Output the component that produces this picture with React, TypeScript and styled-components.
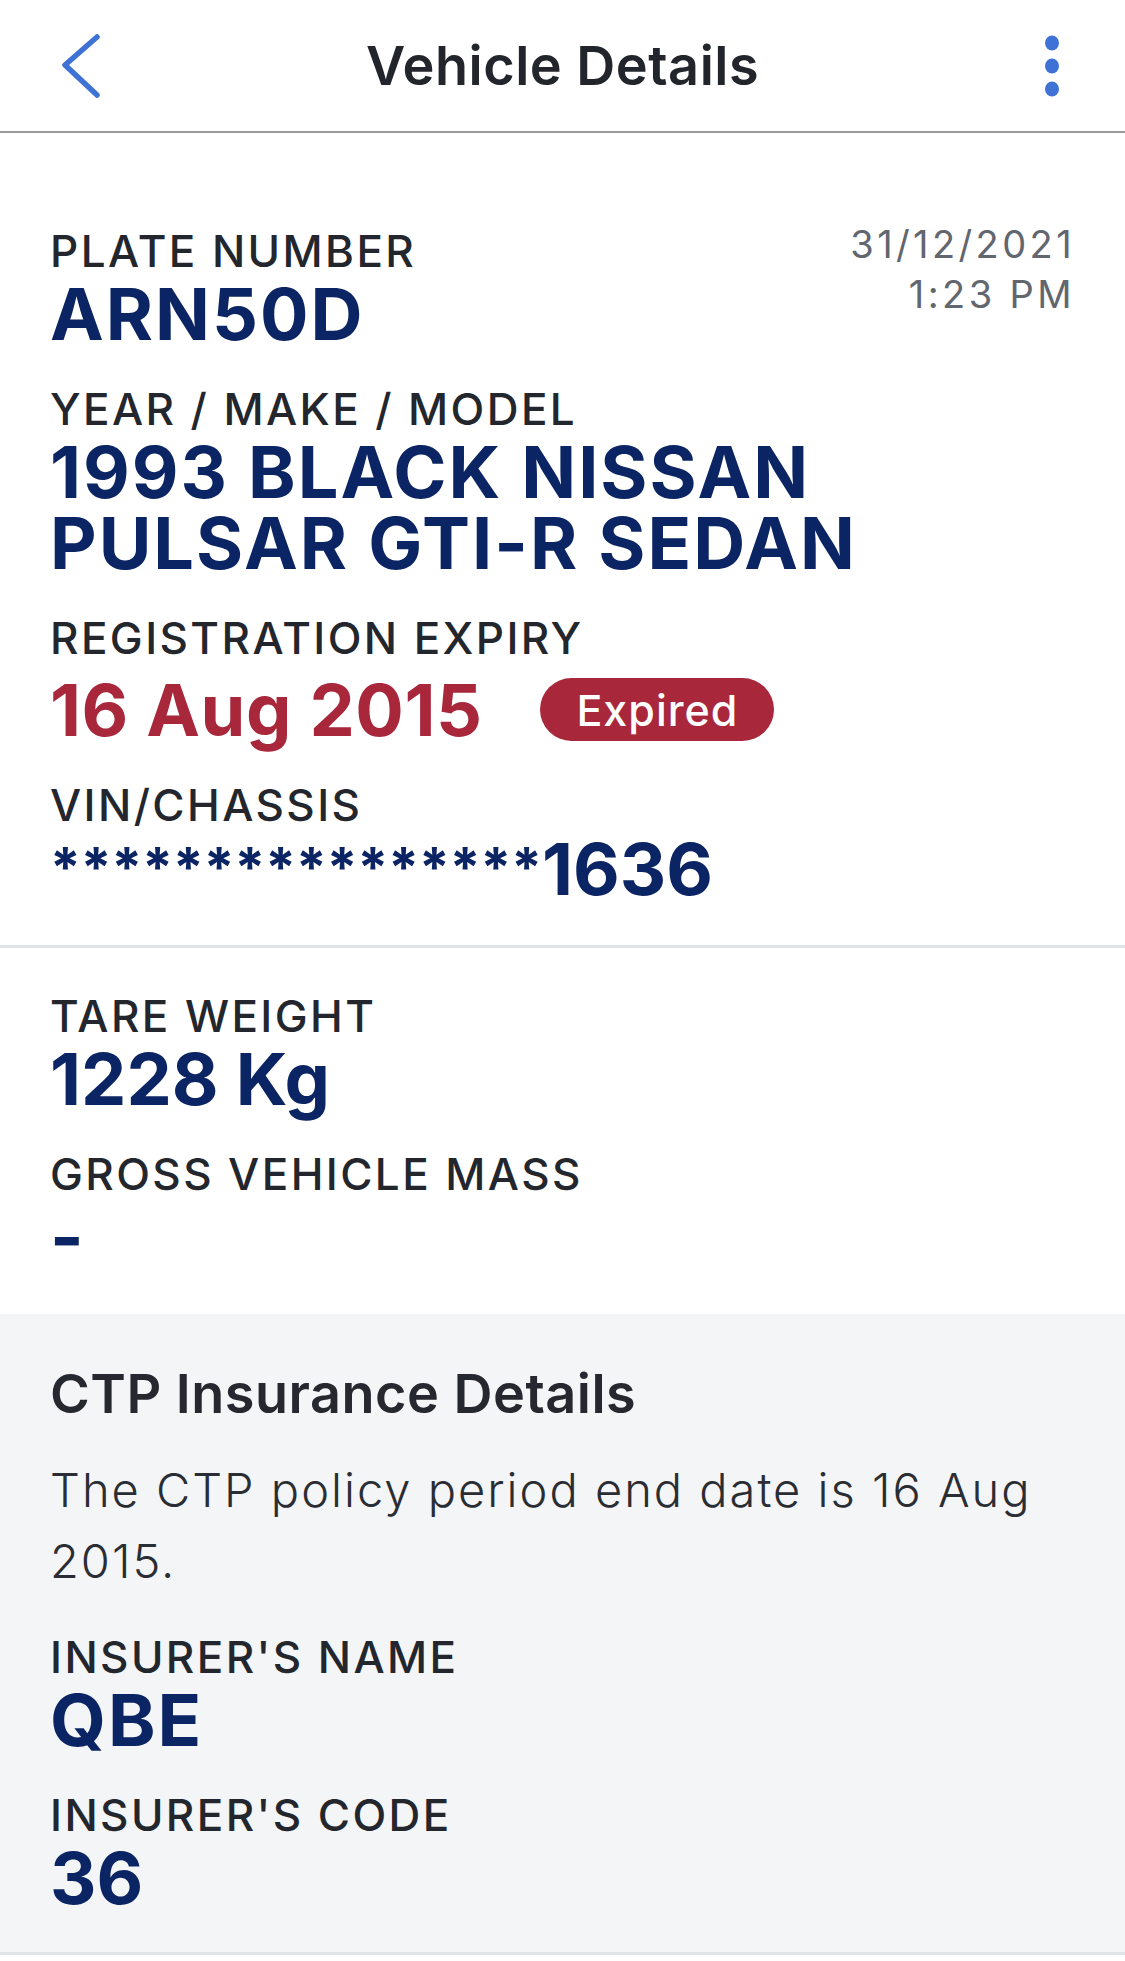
import React from "react";
import styled, { createGlobalStyle } from "styled-components";

const GlobalStyle = createGlobalStyle`
  html, body {
    margin: 0;
    padding: 0;
    background: #ffffff;
  }
  body {
    font-family: Inter, "Noto Sans", sans-serif;
    -webkit-font-smoothing: antialiased;
  }
  * {
    box-sizing: border-box;
  }
`;

const Page = styled.div`
  width: 1125px;
  min-height: 1961px;
  background: #ffffff;
  display: flex;
  flex-direction: column;
`;

const TopBar = styled.header`
  height: 133px;
  display: grid;
  grid-template-columns: 200px 1fr 200px;
  align-items: center;
  border-bottom: 2px solid #9a9a9a;
`;

const BackButton = styled.button`
  justify-self: start;
  margin-left: 58px;
  padding: 0;
  border: none;
  background: none;
  display: flex;
  cursor: pointer;
`;

const MenuButton = styled(BackButton)`
  justify-self: end;
  margin-left: 0;
  margin-right: 63px;
`;

const Title = styled.h1`
  margin: 0;
  text-align: center;
  font-size: 54px;
  font-weight: 600;
  letter-spacing: 0.5px;
  color: #22252c;
`;

const Section = styled.section<{ $tint?: boolean; $top: number; $bottom: number; $rule?: boolean }>`
  padding: ${(p) => p.$top}px 50px ${(p) => p.$bottom}px;
  background: ${(p) => (p.$tint ? "#f4f5f7" : "#ffffff")};
  border-bottom: ${(p) => (p.$rule ? "3px solid #e0e3e7" : "none")};
`;

const Fields = styled.div<{ $offset?: number }>`
  display: flex;
  flex-direction: column;
  gap: 36px;
  margin-top: ${(p) => p.$offset || 0}px;
`;

const TopRow = styled.div`
  display: flex;
  justify-content: space-between;
  align-items: flex-start;
`;

const Field = styled.div`
  display: flex;
  flex-direction: column;
`;

const Label = styled.div`
  font-size: 44px;
  line-height: 48px;
  font-weight: 500;
  letter-spacing: 2.4px;
  color: #23262d;
`;

const Value = styled.div<{ $tone?: "navy" | "red"; $tight?: boolean }>`
  margin-top: 3px;
  font-size: 72px;
  line-height: 71px;
  font-weight: 700;
  letter-spacing: ${(p) => (p.$tight ? "0px" : "2px")};
  color: ${(p) => (p.$tone === "red" ? "#a8273b" : "#0b2463")};
`;

const Stars = styled.span`
  font-size: 55px;
  letter-spacing: 0;
  vertical-align: 8px;
`;

const ExpiryRow = styled.div`
  margin-top: 12px;
  display: flex;
  align-items: center;
  gap: 58px;
  height: 71px;

  ${Value} {
    margin-top: 0;
    letter-spacing: 0.5px;
  }
`;

const Badge = styled.span`
  height: 63px;
  padding: 0 36px;
  border-radius: 32px;
  background: #a8273b;
  color: #ffffff;
  font-size: 43px;
  font-weight: 500;
  letter-spacing: 1px;
  display: inline-flex;
  align-items: center;
`;

const Stamp = styled.div`
  margin-top: -8px;
  text-align: right;
  font-size: 38px;
  line-height: 50px;
  font-weight: 400;
  letter-spacing: 3.4px;
  color: #62666e;
`;

const Heading = styled.h2`
  margin: 0;
  font-size: 54px;
  line-height: 66px;
  font-weight: 600;
  letter-spacing: 0.5px;
  color: #25282f;
`;

const Para = styled.p`
  margin: 27px 0 0;
  max-width: 1010px;
  font-size: 47px;
  line-height: 71px;
  font-weight: 300;
  letter-spacing: 2px;
  color: #2a2d33;
`;

const Chevron = () => (
  <svg width="44" height="66" viewBox="0 0 44 66">
    <polyline
      points="39,4 7,32 39,62"
      fill="none"
      stroke="#3f72d5"
      strokeWidth="5.5"
      strokeLinecap="round"
      strokeLinejoin="round"
    />
  </svg>
);

const Kebab = () => (
  <svg width="20" height="66" viewBox="0 0 20 66">
    <ellipse cx="10" cy="10" rx="7" ry="7.5" fill="#3f72d5" />
    <ellipse cx="10" cy="33" rx="7" ry="7.5" fill="#3f72d5" />
    <ellipse cx="10" cy="56" rx="7" ry="7.5" fill="#3f72d5" />
  </svg>
);

export default function App() {
  return (
    <Page>
      <GlobalStyle />
      <TopBar>
        <BackButton aria-label="Back">
          <Chevron />
        </BackButton>
        <Title>Vehicle Details</Title>
        <MenuButton aria-label="More">
          <Kebab />
        </MenuButton>
      </TopBar>

      <Section $top={94} $bottom={41} $rule>
        <Fields>
          <TopRow>
            <Field>
              <Label>PLATE NUMBER</Label>
              <Value>ARN50D</Value>
            </Field>
            <Stamp>
              31/12/2021
              <br />
              1:23 PM
            </Stamp>
          </TopRow>
          <Field>
            <Label>YEAR / MAKE / MODEL</Label>
            <Value>
              1993 BLACK NISSAN
              <br />
              PULSAR GTI-R SEDAN
            </Value>
          </Field>
          <Field>
            <Label>REGISTRATION EXPIRY</Label>
            <ExpiryRow>
              <Value $tone="red">16 Aug 2015</Value>
              <Badge>Expired</Badge>
            </ExpiryRow>
          </Field>
          <Field>
            <Label>VIN/CHASSIS</Label>
            <Value $tight>
              <Stars>****************</Stars>1636
            </Value>
          </Field>
        </Fields>
      </Section>

      <Section $top={44} $bottom={42}>
        <Fields>
          <Field>
            <Label>TARE WEIGHT</Label>
            <Value $tight>1228 Kg</Value>
          </Field>
          <Field>
            <Label>GROSS VEHICLE MASS</Label>
            <Value>-</Value>
          </Field>
        </Fields>
      </Section>

      <Section $tint $top={47} $bottom={39} $rule>
        <Heading>CTP Insurance Details</Heading>
        <Para>The CTP policy period end date is 16 Aug 2015.</Para>
        <Fields $offset={37}>
          <Field>
            <Label>INSURER'S NAME</Label>
            <Value>QBE</Value>
          </Field>
          <Field>
            <Label>INSURER'S CODE</Label>
            <Value $tight>36</Value>
          </Field>
        </Fields>
      </Section>
    </Page>
  );
}
